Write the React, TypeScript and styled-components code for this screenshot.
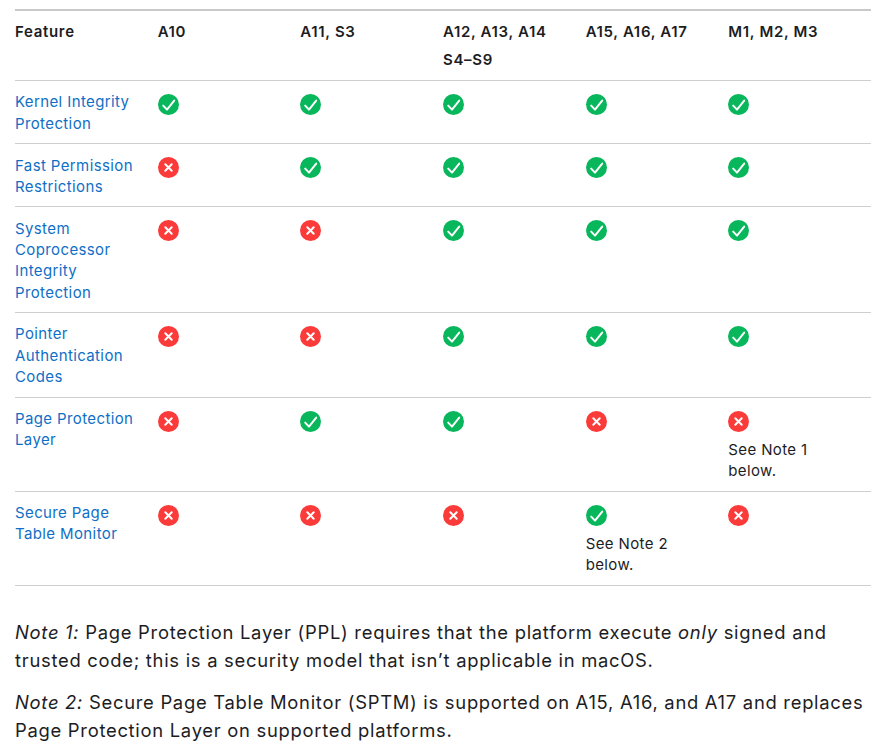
import React from "react";
import styled, { createGlobalStyle } from "styled-components";

const Global = createGlobalStyle`
  html, body { margin: 0; padding: 0; background: #fff; }
  body { font-family: Inter, "Liberation Sans", sans-serif; color: #1d1d1f; }
`;
const Page = styled.main`
  width: 856px;
  padding: 9px 5px 0 15px;
  height: 739px;
  overflow: hidden;
`;
const Table = styled.table`
  width: 856px;
  table-layout: fixed;
  border-collapse: collapse;
  border-top: 2px solid #c9c9c9;
`;
const HeadCell = styled.th`
  padding: 7px 0 6px 0;
  text-align: left;
  vertical-align: top;
  font-size: 15px;
  line-height: 28px;
  font-weight: 600;
  letter-spacing: 0.68px;
  color: #1d1d1f;
`;
const Row = styled.tr`
  border-top: 1px solid #cfcfcf;
  &:last-child { border-bottom: 1px solid #cfcfcf; }
`;
const Cell = styled.td`
  padding: 10.4px 20px 9.1px 0;
  vertical-align: top;
  font-size: 15px;
  line-height: 21.33px;
  letter-spacing: 0.38px;
`;
const FeatureLink = styled.a`
  color: #0f6fc6;
  text-decoration: none;
`;
const IconSlot = styled.span`
  display: block;
  height: 31px;
  padding-top: 2.6px;
  box-sizing: border-box;
`;
const Note = styled.p<{ $top: number }>`
  margin: ${(p) => p.$top}px 0 0;
  font-size: 18.4px;
  line-height: 28px;
  letter-spacing: 0.72px;
  width: 856px;
`;

const Check = () => (
  <svg width="21" height="21" viewBox="0 0 21 21" aria-hidden>
    <circle cx="10.5" cy="10.5" r="10.5" fill="#08b65b" />
    <path d="M5.2 11.6l3.8 4L16.2 6.6" fill="none" stroke="#fff" strokeWidth="2" strokeLinecap="round" strokeLinejoin="round" />
  </svg>
);
const Cross = () => (
  <svg width="21" height="21" viewBox="0 0 21 21" aria-hidden>
    <circle cx="10.5" cy="10.5" r="10.5" fill="#fb3a3a" />
    <path d="M7.3 7.3l6.4 6.4M13.7 7.3l-6.4 6.4" fill="none" stroke="#fff" strokeWidth="2" strokeLinecap="round" />
  </svg>
);

type Mark = { ok: boolean; note?: string };
const y = (note?: string): Mark => ({ ok: true, note });
const n = (note?: string): Mark => ({ ok: false, note });

const rows: { name: string; marks: Mark[] }[] = [
  { name: "Kernel Integrity Protection", marks: [y(), y(), y(), y(), y()] },
  { name: "Fast Permission Restrictions", marks: [n(), y(), y(), y(), y()] },
  { name: "System Coprocessor Integrity Protection", marks: [n(), n(), y(), y(), y()] },
  { name: "Pointer Authentication Codes", marks: [n(), n(), y(), y(), y()] },
  { name: "Page Protection Layer", marks: [n(), y(), y(), n(), n("See Note 1 below.")] },
  { name: "Secure Page Table Monitor", marks: [n(), n(), n(), y("See Note 2 below."), n()] },
];

export default function App() {
  return (
    <Page>
      <Global />
      <Table>
        <thead>
          <tr>
            <HeadCell>Feature</HeadCell>
            <HeadCell>A10</HeadCell>
            <HeadCell>A11, S3</HeadCell>
            <HeadCell>A12, A13, A14<br />S4–S9</HeadCell>
            <HeadCell>A15, A16, A17</HeadCell>
            <HeadCell>M1, M2, M3</HeadCell>
          </tr>
        </thead>
        <tbody>
          {rows.map((r) => (
            <Row key={r.name}>
              <Cell><FeatureLink href="#">{r.name}</FeatureLink></Cell>
              {r.marks.map((m, i) => (
                <Cell key={i}>
                  <IconSlot>{m.ok ? <Check /> : <Cross />}</IconSlot>
                  {m.note}
                </Cell>
              ))}
            </Row>
          ))}
        </tbody>
      </Table>
      <Note $top={32}><em>Note 1:</em> Page Protection Layer (PPL) requires that the platform execute <em>only</em> signed and trusted code; this is a security model that isn’t applicable in macOS.</Note>
      <Note $top={14}><em>Note 2:</em> Secure Page Table Monitor (SPTM) is supported on A15, A16, and A17 and replaces Page Protection Layer on supported platforms.</Note>
    </Page>
  );
}
